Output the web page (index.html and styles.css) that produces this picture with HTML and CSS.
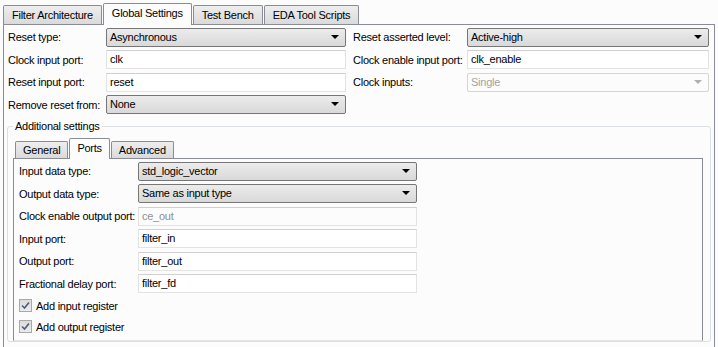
FILE: index.html
```html
<!DOCTYPE html>
<html lang="en">
<head>
  <title>Global Settings</title>
  <meta charset="utf-8">
  <link rel="stylesheet" href="styles.css">
</head>
<body>
  <div class="tabs">
    <span class="tab">Filter Architecture</span>
    <span class="tab active">Global Settings</span>
    <span class="tab">Test Bench</span>
    <span class="tab">EDA Tool Scripts</span>
  </div>

  <div class="panel">
    <div class="form-grid">
      <span class="label">Reset type:</span>
      <div class="select">Asynchronous</div>
      <span></span>
      <span class="label">Reset asserted level:</span>
      <div class="select">Active-high</div>

      <span class="label">Clock input port:</span>
      <div class="input">clk</div>
      <span></span>
      <span class="label">Clock enable input port:</span>
      <div class="input">clk_enable</div>

      <span class="label">Reset input port:</span>
      <div class="input">reset</div>
      <span></span>
      <span class="label">Clock inputs:</span>
      <div class="select disabled">Single</div>

      <span class="label">Remove reset from:</span>
      <div class="select">None</div>
    </div>

    <fieldset class="group">
      <legend>Additional settings</legend>
      <div class="tabs tabs-inner">
        <span class="tab">General</span>
        <span class="tab active">Ports</span>
        <span class="tab">Advanced</span>
      </div>
      <div class="subpanel">
        <div class="sub-grid">
          <span class="label">Input data type:</span>
          <div class="select">std_logic_vector</div>
          <span class="label">Output data type:</span>
          <div class="select">Same as input type</div>
          <span class="label">Clock enable output port:</span>
          <div class="input disabled">ce_out</div>
          <span class="label">Input port:</span>
          <div class="input">filter_in</div>
          <span class="label">Output port:</span>
          <div class="input">filter_out</div>
          <span class="label">Fractional delay port:</span>
          <div class="input">filter_fd</div>
        </div>
        <label class="check-row">
          <span class="checkbox"><svg width="9" height="9" viewBox="0 0 9 9"><path d="M1 4.5 L3.5 7 L8 1.5" fill="none" stroke="#4f5d7c" stroke-width="1.6"/></svg></span>
          Add input register
        </label>
        <label class="check-row">
          <span class="checkbox"><svg width="9" height="9" viewBox="0 0 9 9"><path d="M1 4.5 L3.5 7 L8 1.5" fill="none" stroke="#4f5d7c" stroke-width="1.6"/></svg></span>
          Add output register
        </label>
      </div>
    </fieldset>
  </div>
</body>
</html>
```

FILE: styles.css
```css
html, body {
  height: 347px;
  overflow: hidden;
}

body {
  background-color: #fcfcfc;
  color: #000000;
  font-family: "Liberation Sans", Arial, sans-serif;
  font-size: 11px;
  letter-spacing: -0.25px;
  margin: 0;
}

.tabs {
  align-items: flex-end;
  display: flex;
  height: 24px;
  padding-left: 3px;
}

.tab {
  background: linear-gradient(#eeeeee, #dadada);
  border: 1px solid #898c95;
  border-bottom: none;
  border-radius: 2px 2px 0 0;
  box-sizing: border-box;
  height: 19px;
  line-height: 18px;
  margin-right: 1px;
  padding: 0 8px;
}

.tab.active {
  background: #fcfcfc;
  height: 22px;
  line-height: 19px;
  margin-bottom: -1px;
  padding: 0 8px;
  position: relative;
  z-index: 1;
}

.panel {
  border: 1px solid #898c95;
  border-bottom: none;
  height: 330px;
  margin-left: 3px;
  padding: 1px 2px 0 3px;
  width: 705px;
}

.form-grid {
  align-items: center;
  display: grid;
  grid-auto-rows: 22.5px;
  grid-template-columns: 98px 240px 7px 114px 242px;
  padding-left: 1px;
}

.label {
  white-space: nowrap;
}

.select, .input {
  box-sizing: border-box;
  height: 19px;
  line-height: 17px;
  padding: 0 3px;
  position: relative;
}

.select {
  background: linear-gradient(#ececec, #e2e2e2 50%, #d9d9d9);
  border: 1px solid #767676;
  border-radius: 2px;
}

.select::after {
  border-left: 4px solid transparent;
  border-right: 4px solid transparent;
  border-top: 4px solid #000000;
  content: '';
  position: absolute;
  right: 6px;
  top: 6px;
}

.select.disabled {
  background: #fcfcfc;
  border-color: #d5d5d5;
  color: #a3a3a3;
}

.select.disabled::after {
  border-top-color: #b0b0b0;
}

.input {
  background: #ffffff;
  border: 1px solid #e3e3e3;
  border-top-color: #d0d0d0;
}

.input.disabled {
  background: #fcfcfc;
  color: #8f8f8f;
}

.group {
  border: 1px solid #dcdfe3;
  border-radius: 3px;
  margin: 3px 1px 0 0;
  min-width: 0;
  padding: 0 7px 0 5px;
}

.group legend {
  line-height: 14px;
  padding: 0 2px;
}

.tabs-inner {
  height: 25px;
  padding-left: 2px;
}

.tabs-inner .tab {
  height: 17px;
  line-height: 16px;
  padding: 0 7px;
}

.tabs-inner .tab.active {
  height: 21px;
  line-height: 19px;
  padding: 0 7px;
}

.subpanel {
  border: 1px solid #898c95;
  border-bottom-color: #e3e3e3;
  padding: 1px 5px 3px 5px;
}

.sub-grid {
  align-items: center;
  display: grid;
  grid-auto-rows: 22.5px;
  grid-template-columns: 119px 279px;
}

.check-row {
  align-items: center;
  display: flex;
  gap: 4px;
  height: 21px;
}

.checkbox {
  align-items: center;
  background: linear-gradient(#dcdcdc, #ececec);
  border: 1px solid #a8a8a8;
  box-sizing: border-box;
  display: flex;
  height: 13px;
  justify-content: center;
  width: 13px;
}
```
